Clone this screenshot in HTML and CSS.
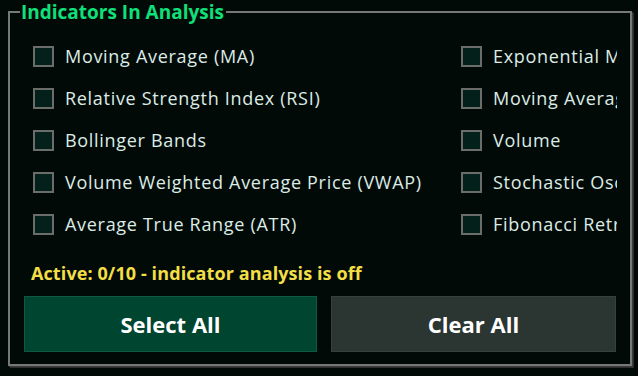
FILE: index.html
```html
<!DOCTYPE html>
<html lang="en">
<head>
<meta charset="utf-8">
<title>Indicators In Analysis</title>
<link rel="stylesheet" href="styles.css">
</head>
<body>
<fieldset class="panel">
  <legend class="panel-title">Indicators In Analysis</legend>
  <div class="list">
    <label class="item"><span class="box"></span><span class="text">Moving Average (MA)</span></label>
    <label class="item"><span class="box"></span><span class="text">Exponential Moving Average (EMA)</span></label>
    <label class="item"><span class="box"></span><span class="text">Relative Strength Index (RSI)</span></label>
    <label class="item"><span class="box"></span><span class="text">Moving Average Convergence Divergence (MACD)</span></label>
    <label class="item"><span class="box"></span><span class="text">Bollinger Bands</span></label>
    <label class="item"><span class="box"></span><span class="text">Volume</span></label>
    <label class="item"><span class="box"></span><span class="text">Volume Weighted Average Price (VWAP)</span></label>
    <label class="item"><span class="box"></span><span class="text">Stochastic Oscillator</span></label>
    <label class="item"><span class="box"></span><span class="text">Average True Range (ATR)</span></label>
    <label class="item"><span class="box"></span><span class="text">Fibonacci Retracement</span></label>
  </div>
  <div class="status">Active: 0/10 - indicator analysis is off</div>
  <div class="actions">
    <button class="btn btn-select" type="button">Select All</button>
    <button class="btn btn-clear" type="button">Clear All</button>
  </div>
</fieldset>
</body>
</html>
```
FILE: styles.css
```css
html, body {
  margin: 0;
  padding: 0;
  background: #020a08;
  width: 638px;
  height: 376px;
  overflow: hidden;
  font-family: "Open Sans", "Noto Sans", sans-serif;
}

.panel {
  margin: 2px 6px 0 8px;
  padding: 13px 14px 12px 14px;
  border: 2px solid #777977;
  box-shadow: 1px 1px 0 #3a3d3b, 2px 2px 0 #2a2d2b;
  min-width: 0;
}

.panel-title {
  margin-left: -4px;
  padding: 0 2px 0 1px;
  color: #10e07a;
  font-weight: 700;
  font-size: 19px;
  line-height: 20px;
}

.list {
  margin-left: 9px;
  width: 584px;
  overflow: hidden;
  display: grid;
  grid-template-columns: 428px 156px;
  grid-auto-rows: 42px;
}

.item {
  display: flex;
  align-items: center;
  gap: 11px;
  white-space: nowrap;
  overflow: hidden;
}

.box {
  flex: none;
  width: 17px;
  height: 17px;
  border: 2px solid #6b6d6b;
  background: #03201a;
}

.text {
  color: #dcece6;
  font-size: 18px;
  line-height: 22px;
  letter-spacing: 0.7px;
}

.status {
  margin: 18px 0 0 7px;
  color: #f2df45;
  font-weight: 700;
  font-size: 18px;
  line-height: 20px;
  letter-spacing: 0.1px;
}

.actions {
  margin-top: 13px;
  display: grid;
  grid-template-columns: 293px 1fr;
  gap: 14px;
}

.btn {
  height: 56px;
  margin: 0;
  padding: 0;
  font-family: inherit;
  font-weight: 700;
  font-size: 22px;
  color: #ffffff;
  cursor: pointer;
}

.btn-select {
  background: #00452f;
  border: 1px solid #0b5a41;
}

.btn-clear {
  background: #2b3532;
  border: 1px solid #36413e;
}
```
